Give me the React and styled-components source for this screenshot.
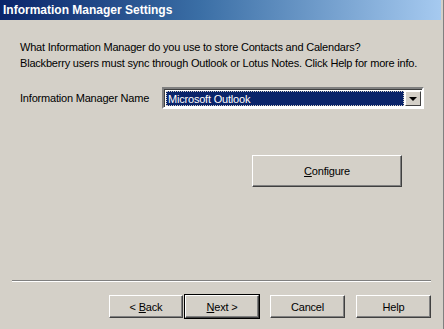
import React from 'react';
import styled, { createGlobalStyle } from 'styled-components';

const GlobalStyle = createGlobalStyle`
  html, body {
    margin: 0;
    padding: 0;
    background: #d4d0c8;
  }
  body {
    font-family: Tahoma, "Liberation Sans", Arial, sans-serif;
    font-size: 11px;
    letter-spacing: -0.2px;
    color: #000;
  }
`;

const Window = styled.div`
  width: 444px;
  height: 329px;
  box-sizing: border-box;
  background: #d4d0c8;
  border-right: 1px solid #808080;
  display: flex;
  flex-direction: column;
  overflow: hidden;
`;

const TitleBar = styled.div`
  height: 20px;
  margin-right: 2px;
  background: linear-gradient(to right, #0a246a 0%, #3a6ea5 45%, #a6caf0 100%);
  color: #fff;
  font-weight: bold;
  font-size: 12px;
  letter-spacing: 0;
  display: flex;
  align-items: center;
  padding-left: 3px;
`;

const Body = styled.div`
  flex: 1;
  display: flex;
  flex-direction: column;
  padding: 19px 0 0 20px;
`;

const Intro = styled.p`
  margin: 0;
  line-height: 16px;
`;

const FieldRow = styled.div`
  display: flex;
  align-items: center;
  margin-top: 16px;
`;

const Label = styled.span`
  width: 142px;
`;

const Select = styled.div`
  width: 262px;
  height: 22px;
  box-sizing: border-box;
  background: #fff;
  border-style: solid;
  border-width: 2px;
  border-color: #808080 #fff #fff #808080;
  box-shadow: inset 1px 1px 0 #404040;
  display: flex;
  align-items: stretch;
  padding: 2px 1px 1px 2px;
`;

const SelectValue = styled.div`
  flex: 1;
  background: #0a246a;
  color: #fff;
  outline: 1px dotted #d4d0c8;
  outline-offset: -1px;
  display: flex;
  align-items: center;
  padding-left: 2px;
`;

const DropButton = styled.div`
  width: 16px;
  margin-left: 1px;
  box-sizing: border-box;
  background: #d4d0c8;
  border-style: solid;
  border-width: 1px;
  border-color: #fff #404040 #404040 #fff;
  display: flex;
  align-items: center;
  justify-content: center;
`;

const Arrow = styled.span`
  width: 0;
  height: 0;
  border-left: 4px solid transparent;
  border-right: 4px solid transparent;
  border-top: 4px solid #000;
`;

const ConfigureRow = styled.div`
  display: flex;
  margin-top: 46px;
  padding-left: 232px;
`;

const Button = styled.button`
  width: ${props => props.w || 75}px;
  height: ${props => props.h || 23}px;
  box-sizing: border-box;
  background: #d4d0c8;
  font: inherit;
  letter-spacing: inherit;
  color: #000;
  padding: 0;
  border-style: solid;
  border-width: 1px;
  border-color: #fff #404040 #404040 #fff;
  box-shadow: inset -1px -1px 0 #808080;
  outline: ${props => (props.isDefault ? '1px solid #000' : 'none')};
  outline-offset: 0;
  u {
    text-decoration: underline;
  }
`;

const Separator = styled.div`
  margin: auto 12px 0 -8px;
  height: 0;
  border-top: 1px solid #808080;
  border-bottom: 1px solid #fff;
`;

const Footer = styled.div`
  display: flex;
  justify-content: flex-end;
  align-items: center;
  padding: 13px 12px 11px 0;
  gap: 11px;
`;

const NavPair = styled.div`
  display: flex;
  gap: 2px;
`;

const App = () => (
  <>
    <GlobalStyle />
    <Window>
      <TitleBar>Information Manager Settings</TitleBar>
      <Body>
        <Intro>
          What Information Manager do you use to store Contacts and Calendars?
          <br />
          Blackberry users must sync through Outlook or Lotus Notes. Click Help for more info.
        </Intro>
        <FieldRow>
          <Label>Information Manager Name</Label>
          <Select>
            <SelectValue>Microsoft Outlook</SelectValue>
            <DropButton>
              <Arrow />
            </DropButton>
          </Select>
        </FieldRow>
        <ConfigureRow>
          <Button type="button" w={150} h={32}>
            <u>C</u>onfigure
          </Button>
        </ConfigureRow>
        <Separator />
        <Footer>
          <NavPair>
            <Button type="button" w={74}>
              &lt; <u>B</u>ack
            </Button>
            <Button type="button" w={74} isDefault>
              <u>N</u>ext &gt;
            </Button>
          </NavPair>
          <Button type="button" w={75}>Cancel</Button>
          <Button type="button" w={75}>Help</Button>
        </Footer>
      </Body>
    </Window>
  </>
);

export default App;
